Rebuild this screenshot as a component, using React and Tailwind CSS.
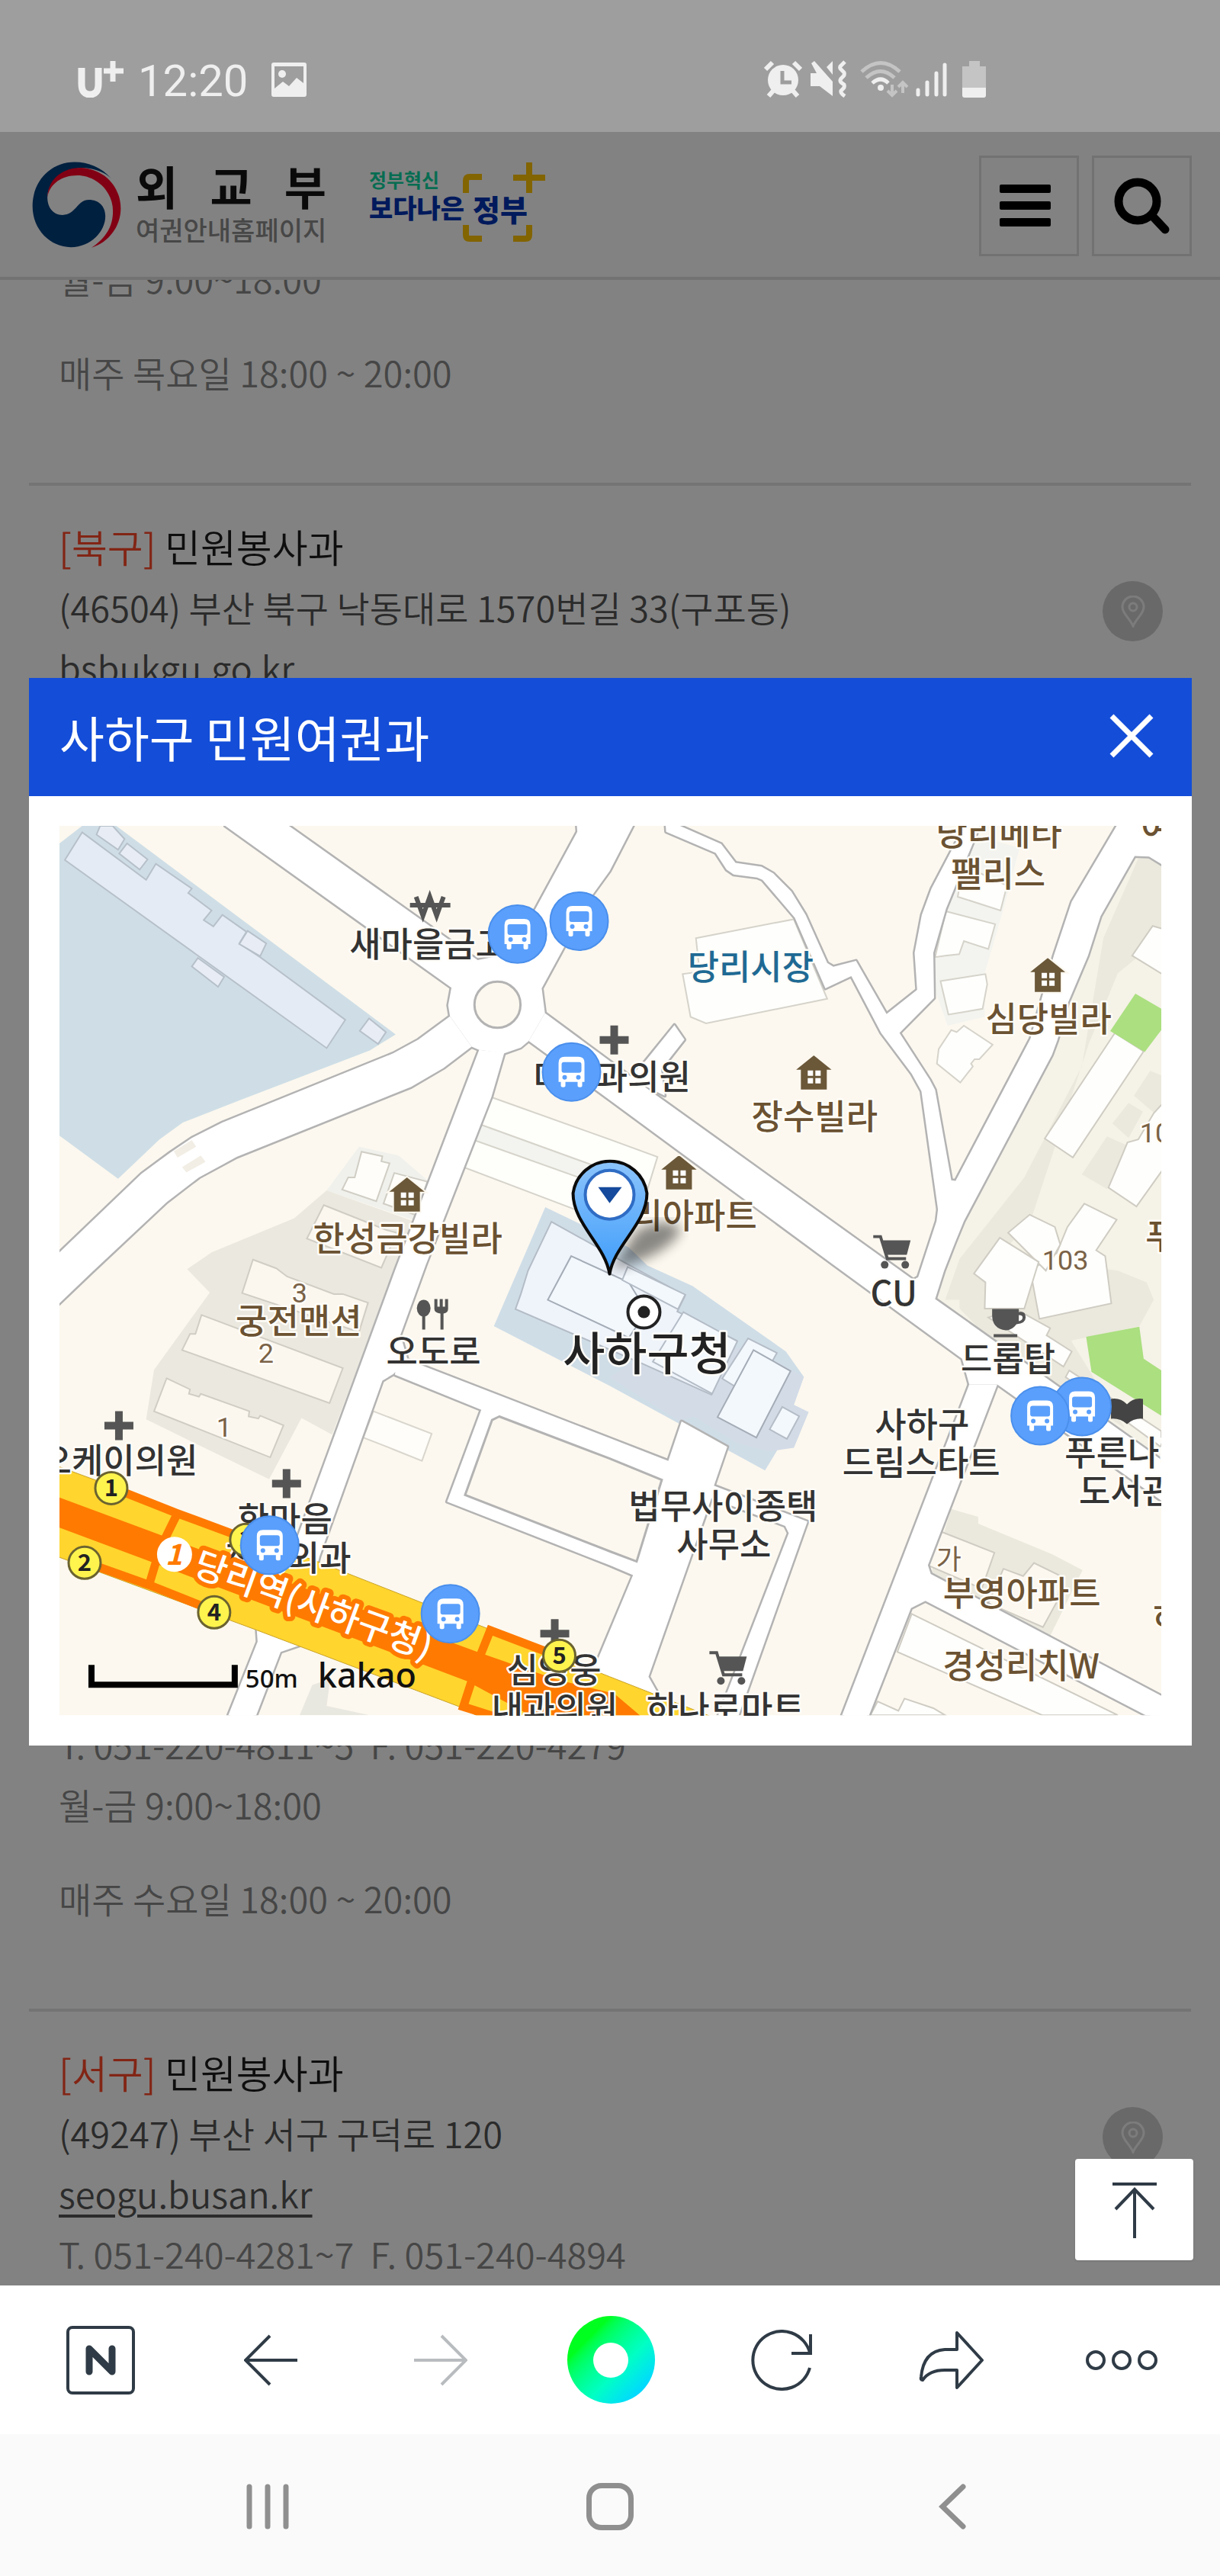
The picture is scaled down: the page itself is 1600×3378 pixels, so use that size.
const offices = [
  {
    id: "prev",
    size: "",
    hours: ["월-금 9:00~18:00", "매주 목요일 18:00 ~ 20:00"],
  },
  {
    id: "bukgu",
    size: "min-h-[667px]",
    district: "북구",
    name: "민원봉사과",
    address: "(46504) 부산 북구 낙동대로 1570번길 33(구포동)",
    site: "bsbukgu.go.kr",
  },
  {
    id: "sahagu",
    size: "min-h-[1334px] justify-end",
    tel: "051-220-4811~5",
    fax: "051-220-4279",
    hours: ["월-금 9:00~18:00", "매주 수요일 18:00 ~ 20:00"],
  },
  {
    id: "seogu",
    size: "",
    district: "서구",
    name: "민원봉사과",
    address: "(49247) 부산 서구 구덕로 120",
    site: "seogu.busan.kr",
    tel: "051-240-4281~7",
    fax: "051-240-4894",
  },
];

// ground areas and buildings: [points, fill, stroke]
const areas = [
  ["80,35 175,35 952,750 880,805 520,975 360,1052 295,1110 180,1245 17,1097 17,95", "#cfdee6"],
  ["850,1135 960,1165 1040,1250 1010,1390 760,1285", "#f0f1ec"],
  ["760,1285 1000,1390 950,1560 775,2122 690,2065 600,2275 258,2070 280,1900 435,1635 372,1555 440,1497 670,1380", "#ebe8df"],
  ["1368,1342 1600,1480 1652,1542 1777,1612 2037,1837 2087,1924 2059,2020 2100,2045 2059,2167 2027,2147 1979,2245 1547,1955 1225,1750", "#cfdde7"],
  ["1547,1925 1700,1800 1950,1830 2087,1924 2059,2020 2100,2045 2059,2167 1990,2180 1900,2150 1780,2060 1740,2075", "#d3dbe7"],
  ["3007,138 3081,165 3081,2205 2452,1657 2477,1560 2532,1390 2792,770 2912,345", "#f5f2e7"],
  ["3020,138 3050,140 3081,165 3081,420 2960,540 2880,780 2720,1380 2640,1500 2560,1660 2480,1660 2520,1520 2700,1240 2860,860 2920,420", "#ebe8dd"],
  ["2520,1560 2600,1500 2960,1560 3040,1600 3060,1660 3020,1750 2830,1800 2980,2100 2800,1960 2600,1790 2520,1690", "#ebe8dd"],
  ["3050,875 3081,890 3081,1040 3005,960", "#ebe8dd"],
  ["2990,985 3030,1015 2990,1105 2945,1055", "#ebe8dd"],
  ["2930,1100 2985,1130 2930,1280 2860,1230", "#ebe8dd"],
  ["2570,70 2687,110 2640,330 2590,540 2590,690 2487,720 2455,610 2449,470 2482,320", "#f3f4ef"],
  ["2497,2377 2572,2404 2572,2427 2777,2532 2862,2587 2772,2812 2440,2602", "#ebe9de"],
  ["720,2980 770,2960 760,3052 880,3084 685,3084", "#e9e8e0"],
];

const buildings = [
  ["80,57 258,220 285,165 385,250 375,265 440,325 418,358 445,380 470,340 537,398 517,438 575,485 812,700 760,797 32,152", "#e4ebf4", "#b7c0ca"],
  ["130,35 165,35 198,80 180,117 120,65", "#e8edf5", "#b7c0ca"],
  ["205,95 262,150 240,185 183,130", "#e8edf5", "#b7c0ca"],
  ["540,395 592,438 575,482 517,440", "#e8edf5", "#b7c0ca"],
  ["402,488 475,553 458,587 385,517", "#e8edf5", "#b7c0ca"],
  ["878,695 925,742 903,783 852,738", "#e8edf5", "#b7c0ca"],
  ["857,1152 915,1168 912,1185 935,1192 898,1322 803,1282 820,1240 838,1240", "#fefdf9", "#d0cdc4"],
  ["948,1225 1040,1255 1010,1370 918,1330", "#fefdf9", "#d0cdc4"],
  ["752,1335 925,1420 955,1430 912,1550 705,1450", "#fbf7ef", "#d0cdc4"],
  ["555,1522 620,1552 650,1580 780,1640 805,1640 875,1670 850,1770 525,1637", "#fbf7ef", "#d0cdc4"],
  ["412,1712 805,1894 768,2014 358,1832 380,1777 395,1777", "#fbf7ef", "#d0cdc4"],
  ["315,1929 380,1967 377,1982 405,1992 410,1982 545,2042 543,2060 570,2067 575,2057 640,2090 603,2200 280,2042", "#fbf7ef", "#d0cdc4"],
  ["890,2042 1052,2119 1025,2212 950,2175 930,2165 862,2132", "#fefdf9", "#d9d6cd"],
  ["1218,965 1547,1110 1680,1170 1640,1330 1600,1420 1140,1205", "#fefefa", "#d5d3ca"],
  ["1190,1060 1560,1225 1540,1275 1165,1110", "#f3f4ef", "#d5d3ca"],
  ["1385,1392 1600,1540 1757,1645 1735,1700 1900,1800 1830,1985 1640,1880 1285,1692 1300,1640 1320,1560", "#eff4fb", "#b4bcc6"],
  ["1440,1510 1600,1600 1650,1700 1600,1790 1375,1660", "#f3f8fd", "#a4acb6"],
  ["1597,1547 1757,1642 1737,1692 1582,1592", "#f3f8fd", "#b4bcc6"],
  ["1752,1702 1902,1802 1832,1982 1667,1872", "#f3f8fd", "#b4bcc6"],
  ["1932,1792 2012,1842 1992,1887 1900,1960 1860,1930", "#f3f8fd", "#b4bcc6"],
  ["1947,1832 2050,1904 1955,2132 1847,2062", "#f3f8fd", "#a4acb6"],
  ["2027,2027 2074,2059 2040,2137 1992,2104", "#f3f8fd", "#b4bcc6"],
  ["1787,420 2059,355 2152,628 1815,712 1772,690 1750,543 1797,535", "#fefefc", "#d5d3ca"],
  ["2530,170 2652,240 2634,325 2515,278", "#fefefc", "#d5d3ca"],
  ["2482,328 2619,372 2600,457 2532,430 2519,475 2480,480 2452,485", "#fefefc", "#d5d3ca"],
  ["2467,567 2592,543 2597,578 2584,662 2489,682", "#fefefc", "#d5d3ca"],
  ["2532,720 2612,785 2575,835 2562,835 2552,850 2557,860 2522,915 2457,850 2462,800 2497,735 2512,742", "#fefefc", "#d5d3ca"],
  ["3057,378 3090,390 3090,548 3000,480", "#fefefc", "#cfccc3"],
  ["2952,745 3032,808 2835,1172 2757,1107", "#fefefc", "#cfccc3"],
  ["3090,980 3060,1020 3017,1110 2987,1120 2960,1200 2934,1275 3012,1340 3090,1205", "#fefefc", "#cfccc3"],
  ["2867,1330 2957,1385 2900,1490 2925,1510 2942,1672 2742,1725 2717,1560 2790,1500 2820,1410", "#fefefc", "#cfccc3"],
  ["2715,1368 2785,1410 2800,1470 2760,1560 2655,1430", "#fefefc", "#cfccc3"],
  ["2632,1447 2740,1530 2700,1690 2590,1690 2592,1600 2560,1570", "#fefefc", "#cfccc3"],
  ["2677,1692 2772,1757 2762,1782 2832,1837 2809,1889 2600,1720", "#fefefc", "#cfccc3"],
  ["2825,1902 3081,2110 3081,2165 2815,1925", "#fefefc", "#cfccc3"],
  ["2467,2454 2617,2527 2582,2650 2432,2570", "#fcf8ef", "#cfccc3"],
  ["2642,2582 2697,2607 2727,2562 2802,2607 2792,2692 2752,2782 2600,2700", "#fcf8ef", "#cfccc3"],
  ["2387,2737 2960,3084 2750,3084 2347,2867", "#fefefc", "#cfccc3"],
  ["2292,3037 2350,3069 2367,3027 2447,3060 2480,3084 2272,3084", "#fefefc", "#cfccc3"],
];

const parks = [
  "3009,610 3081,662 3081,735 3035,810 2939,738",
  "2872,1787 3020,1752 3032,1862 3081,1902 3081,2057 2887,1907",
];

const roads = [
  "478,35 655,35 1180,495 1230,560 1107,590",
  "1455,20 1457,55 1270,480 1358,592 1500,270 1547,190 1618,20",
  "1107,590 1180,495 1240,480 1300,430 1358,592 1367,677 1322,772 1300,795 1254,815 1184,803 1163,792 1103,688 1098,650",
  "1103,688 1015,768 945,815 470,1052 385,1105 325,1155 245,1228 0,1517 0,1692 105,1568 315,1325 405,1240 510,1170 995,930 1085,865 1163,792",
  "1184,803 1254,813 1218,965 1035,1542 965,1780 985,1865 945,1915 915,1937 740,2540 730,2590 640,2560 680,2470 950,1560",
  "1367,677 1667,950 2392,1592 2452,1657 3100,2225 3100,2365 2625,1950 2547,1950 2527,1862 2172,1542 1547,975 1322,772",
  "1647,840 1727,718 1755,768 1690,870 1700,960 1600,900",
  "1702,20 1704,55 1842,128 1872,185 1892,202 1957,212 1972,220 2062,350 2147,592 2219,550 2302,745 2387,885 2414,945 2460,1350 2456,1390 2405,1582 2380,1600 2452,1657 2477,1560 2507,1465 2532,1390 2777,820 2792,770 2822,640 2877,480 2912,345 3007,138 3047,140 3100,180 3100,20 2964,20 2832,295 2782,480 2717,765 2509,1252 2497,1250 2452,940 2437,905 2353,745 2449,625 2447,470 2482,320 2565,70 2580,20 2540,20 2442,250 2415,340 2395,470 2402,597 2317,680 2232,498 2169,518 2152,505 2092,340 2052,260 2002,198 1969,175 1897,162 1857,97 1715,20",
  "2547,1950 2625,1950 2432,2570 2440,2600 3100,3030 3100,3124 2425,2692 2385,2717 2262,3104 2187,3104",
  "955,1850 1040,1892 1547,2134 1710,2212 1747,2077 1874,2164 1837,2297 2097,2420 1900,3104 1843,3104 2045,2460 2035,2435 1830,2340 1655,2952 1700,3050 1480,2960 1515,2890 1612,2604 1547,2570 1095,2352 1190,2037 950,1917",
  "565,2780 568,2832 480,3104 558,3104 632,2867 720,2830",
];

const brown = "#6b5232";
const dark = "#333333";

const labels = [
  { t: "새마을금고", x: 484, y: 172 },
  { t: "미치과의원", x: 725, y: 346 },
  { t: "당리시장", x: 907, y: 202, c: "#1f6a94" },
  { t: "장수빌라", x: 991, y: 398, c: brown },
  { t: "심당빌라", x: 1298, y: 270, c: brown },
  { t: "당리메타", x: 1233, y: 26, c: brown },
  { t: "팰리스", x: 1232, y: 80, c: brown },
  { t: "여", x: 1440, y: 19, c: brown },
  { t: "당리아파트", x: 812, y: 528, c: brown },
  { t: "푸", x: 1446, y: 555, c: brown },
  { t: "한성금강빌라", x: 457, y: 558, c: brown },
  { t: "궁전맨션", x: 314, y: 666, c: brown },
  { t: "오도로", x: 491, y: 706 },
  { t: "오케이의원", x: 78, y: 850 },
  { t: "한마음", x: 296, y: 927 },
  { t: "정형외과", x: 300, y: 978 },
  { t: "CU", x: 1095, y: 629 },
  { t: "드롭탑", x: 1245, y: 716 },
  { t: "법무사이종택", x: 871, y: 910 },
  { t: "사무소", x: 872, y: 960 },
  { t: "사하구", x: 1132, y: 803 },
  { t: "드림스타트", x: 1131, y: 853 },
  { t: "푸른나라", x: 1402, y: 840 },
  { t: "도서관", x: 1400, y: 890 },
  { t: "부영아파트", x: 1263, y: 1024, c: brown },
  { t: "경성리치W", x: 1262, y: 1119, c: brown },
  { t: "하", x: 1456, y: 1056, c: brown },
  { t: "심영웅", x: 649, y: 1125 },
  { t: "내과의원", x: 650, y: 1175 },
  { t: "하나로마트", x: 874, y: 1175 },
];

const blockNumbers = [
  { t: "3", x: 315, y: 625 },
  { t: "2", x: 271, y: 704 },
  { t: "1", x: 216, y: 802 },
  { t: "103", x: 1320, y: 582 },
  { t: "10", x: 1438, y: 415 },
  { t: "가", x: 1167, y: 976 },
];

const houses = [
  [990, 324],
  [1297, 196],
  [813, 455],
  [456, 484],
];
const clinics = [
  [728, 281],
  [78, 787],
  [298, 863],
  [650, 1060],
];
const carts = [
  [1093, 559],
  [878, 1105],
];
const exits = [
  { n: "1", x: 68, y: 869 },
  { n: "2", x: 33, y: 967 },
  { n: "3", x: 245, y: 937 },
  { n: "4", x: 203, y: 1032 },
  { n: "5", x: 656, y: 1089 },
];
const stops = [
  [601, 142],
  [682, 125],
  [672, 323],
  [276, 944],
  [513, 1034],
  [1342, 762],
  [1287, 774],
];

function Bus({ x, y }) {
  return (
    <g transform={`translate(${x} ${y})`}>
      <circle r="38" fill="#5a9ffb" stroke="#4a8fec" strokeWidth="2" />
      <path
        fill="#fff"
        d="M-9-20H9Q17-20 17-12V13H14V18Q14 20 11 20Q8 20 8 18V13H-8V18Q-8 20-11 20Q-14 20-14 18V13H-17V-12Q-17-20-9-20Z"
      />
      <rect x="-13" y="-13" width="26" height="14" rx="3" fill="#5a9ffb" />
      <circle cx="-9" cy="7" r="3" fill="#5a9ffb" />
      <circle cx="9" cy="7" r="3" fill="#5a9ffb" />
    </g>
  );
}

function House({ x, y }) {
  return (
    <g transform={`translate(${x} ${y})`}>
      <path d="M0-24L26-3H18V23H-18V-3H-26Z" fill="#6b5839" stroke="#fcf8ef" strokeWidth="2" />
      <path d="M-8-3h7v7h-7zM2-3h7v7H2zM-8 7h7v7h-7zM2 7h7v7H2z" fill="#fff" />
    </g>
  );
}

function Cart({ x, y }) {
  return (
    <g transform={`translate(${x} ${y})`} fill="#555">
      <path d="M-25-22H-14L-12-15H24L19 4H-6L-5 7H18V11H-8L-17-18H-25Z" />
      <circle cx="-10" cy="17" r="5" />
      <circle cx="17" cy="17" r="5" />
    </g>
  );
}

function AreaMap() {
  return (
    <svg viewBox="0 0 1446 1167" className="block w-full font-['Noto_Sans_CJK_KR',sans-serif]" role="img" aria-label="사하구청 지도">
      <rect width="1446" height="1167" fill="#fcf8ef" />
      <svg width="1446" height="1167" viewBox="17 35 3064 3049" preserveAspectRatio="none">
        {areas.map(([points, fill]) => (
          <polygon key={points} points={points} fill={fill} />
        ))}
        {buildings.map(([points, fill, stroke]) => (
          <polygon key={points} points={points} fill={fill} stroke={stroke} strokeWidth="2" vectorEffect="non-scaling-stroke" />
        ))}
        {parks.map((points) => (
          <polygon key={points} points={points} fill="#abdf80" />
        ))}
        {roads.map((points) => (
          <polygon key={points} points={points} fill="none" stroke="#b3b3b3" strokeWidth="5" strokeLinejoin="round" vectorEffect="non-scaling-stroke" />
        ))}
        {roads.map((points) => (
          <polygon key={points} points={points} fill="#fff" />
        ))}
        <ellipse cx="1235" cy="648" rx="64" ry="79" fill="#fcf8ef" stroke="#b3b3b3" strokeWidth="3" vectorEffect="non-scaling-stroke" />
        <polygon points="1240,2060 1547,2204 1692,2277 1622,2557 1547,2522 1145,2329 1220,2072" fill="#fcf8ef" stroke="#b3b3b3" strokeWidth="3" vectorEffect="non-scaling-stroke" />
        <polygon points="335,1150 385,1112 397,1135 345,1172" fill="#f2eee5" />
        <polygon points="358,1205 410,1165 423,1187 370,1223" fill="#f2eee5" />
        <polygon points="0,2225 740,2560 1547,2952 1840,3094 1190,3094 1140,3060 565,2792 0,2535" fill="#ffd52e" stroke="#c9a227" strokeWidth="1" vectorEffect="non-scaling-stroke" />
        <polygon points="0,2330 300,2467 1185,2870 1400,2962 1560,3010 1640,3094 1340,3094 1150,2967 280,2562 0,2433" fill="#ff7a00" />
        <g fill="none" stroke="#ff7a00" strokeWidth="11">
          <polyline points="160,2302 345,2392 520,2472" vectorEffect="non-scaling-stroke" />
          <polyline points="345,2392 310,2480" vectorEffect="non-scaling-stroke" />
          <polyline points="85,2558 265,2637 430,2718" vectorEffect="non-scaling-stroke" />
          <polyline points="285,2560 265,2642" vectorEffect="non-scaling-stroke" />
          <polyline points="1390,2875 1215,2793 1187,2880" vectorEffect="non-scaling-stroke" />
          <polyline points="1165,2960 1140,3055 1230,3090" vectorEffect="non-scaling-stroke" />
        </g>
      </svg>

      <g fill="#555">
        {clinics.map(([x, y]) => (
          <path key={y} transform={`translate(${x} ${y})`} d="M-5-19H5V-5H19V5H5V19H-5V5H-19V-5H-5Z" />
        ))}
      </g>
      {houses.map(([x, y]) => (
        <House key={x} x={x} y={y} />
      ))}
      {carts.map(([x, y]) => (
        <Cart key={x} x={x} y={y} />
      ))}
      <g fill="none" stroke="#555" strokeWidth="6">
        <path d="M468 93L477 118L486 93L495 118L504 93M460 104H513" />
      </g>
      <g fill="#555" transform="translate(490 641)">
        <ellipse cx="-12" cy="-8" rx="9" ry="11" />
        <path d="M-14 0h4v20h-4zM2-20h4v10h3v-10h4v10h3v-10h4v13q0 5-6 6v21h-4V-1q-8-1-8-6z" />
      </g>
      <g fill="#555" transform="translate(1245 652)">
        <path d="M-21-18H14V-14Q23-16 23-7Q23 1 11 2Q5 10-3 10Q-21 8-21-10ZM14-10V-2Q19-3 19-7Q19-10 14-10Z" />
        <path d="M-19 15h31v4h-31z" />
      </g>
      <path d="M1380 752Q1392 750 1401 759Q1410 750 1422 752V778Q1410 777 1401 785Q1392 777 1380 778Z" fill="#444" />

      <g textAnchor="middle" stroke="#fffdf8" strokeWidth="5" strokeLinejoin="round" paintOrder="stroke">
        <g fontSize="36" className="font-['Roboto','Noto_Sans_CJK_KR',sans-serif]">
          {blockNumbers.map((l) => (
            <text key={l.t} x={l.x} y={l.y} fill="#7a6247">
              {l.t}
            </text>
          ))}
        </g>
        <g fontSize="45" fontWeight="500">
          {labels.map((l) => (
            <text key={l.t} x={l.x} y={l.y} fill={l.c || dark}>
              {l.t}
            </text>
          ))}
        </g>
        <text x="771" y="714" fontSize="60" fontWeight="500" fill="#222">
          사하구청
        </text>
      </g>
      <circle cx="767" cy="638" r="21" fill="#fff" stroke="#222" strokeWidth="4" />
      <circle cx="767" cy="638" r="8" fill="#222" />

      {exits.map((e) => (
        <g key={e.n}>
          <circle cx={e.x} cy={e.y} r="21" fill="#fff44d" stroke="#6b6330" strokeWidth="3" />
          <text x={e.x} y={e.y + 11} textAnchor="middle" fontSize="31" fontWeight="700" fill="#222">
            {e.n}
          </text>
        </g>
      ))}
      <g transform="rotate(20 335 1025)">
        <text x="333" y="1040" textAnchor="middle" fontSize="46" fontWeight="500" fill="#fff" stroke="#ff7a00" strokeWidth="12" strokeLinejoin="round" paintOrder="stroke">
          당리역(사하구청)
        </text>
      </g>
      <circle cx="151" cy="956" r="23" fill="#fff" />
      <text x="150" y="970" textAnchor="middle" fontSize="38" fontWeight="700" fontStyle="italic" fill="#ff7a00">
        1
      </text>
      {stops.map(([x, y]) => (
        <Bus key={x} x={x} y={y} />
      ))}

      <path d="M42 1101V1127H230V1101" fill="none" stroke="#000" strokeWidth="8" />
      <g className="font-['Noto_Sans',sans-serif]" fill="#111" fontWeight="500">
        <text x="244" y="1131" fontSize="33">
          50m
        </text>
        <text x="339" y="1131" fontSize="45">
          kakao
        </text>
      </g>

      <defs>
        <linearGradient id="pin" x1="0" y1="0" x2="0" y2="1">
          <stop offset="0" stopColor="#8cc4fb" />
          <stop offset="1" stopColor="#3f9dfb" />
        </linearGradient>
        <filter id="soft">
          <feGaussianBlur stdDeviation="8" />
        </filter>
      </defs>
      <path d="M724 584L758 530Q800 510 816 530Q800 560 740 578Z" opacity="0.45" filter="url(#soft)" />
      <path
        d="M722 588C716 550 674 522 674 482A49 49 0 0 1 771 482C771 522 728 550 722 588Z"
        fill="url(#pin)"
        stroke="#0a0a0a"
        strokeWidth="4"
        strokeLinejoin="round"
      />
      <circle cx="722" cy="484" r="32" fill="#fff" stroke="#2f6cc4" strokeWidth="4" />
      <path d="M707 474H738L722 495Z" fill="#154a9c" />
    </svg>
  );
}

function StatusBar() {
  return (
    <div className="flex shrink-0 items-end bg-[#9e9e9e] px-[102px] pt-[79px] pb-[45px] text-[#efefef]">
      <svg className="h-[49px] w-[60px]" viewBox="0 0 60 49" fill="none" stroke="currentColor" role="img" aria-label="U+">
        <path d="M5 10V31Q5 45 16 45Q27 45 27 31V10" strokeWidth="9" />
        <path d="M46 1V28M34 14H60" strokeWidth="7" />
      </svg>
      <time className="ml-[19px] font-['Roboto',sans-serif] text-[58px] leading-[44px]">12:20</time>
      <svg className="ml-[30px] h-[46px] w-[48px]" viewBox="0 0 48 46" fill="currentColor">
        <path fillRule="evenodd" d="M4 0H44Q47 0 47 3V42Q47 45 44 45H4Q1 45 1 42V3Q1 0 4 0ZM5 5V34L16 25L24 31L34 20L43 27V5Z" />
        <circle cx="15" cy="15" r="5" />
      </svg>
      <div className="ml-auto flex w-[496px] items-end">
        <svg className="h-[49px] w-[50px]" viewBox="0 0 50 49">
          <g fill="none" stroke="currentColor" strokeWidth="6">
            <path d="M2 12L11 3M39 3L48 12M6 47L13 39M44 47L37 39" />
          </g>
          <circle cx="25" cy="26" r="20" fill="currentColor" />
          <path d="M24 14V29H36" fill="none" stroke="#9e9e9e" strokeWidth="5" />
        </svg>
        <svg className="ml-[10px] h-[49px] w-[48px]" viewBox="0 0 48 49" fill="currentColor">
          <path d="M1 17H9L2 4L6 1L30 28V47L13 34H1ZM22 9L30 1V19Z" />
          <path d="M46 2L40 8Q39 10 41 12L45 16Q46 19 44 21L41 24Q39 27 41 29L45 32Q46 35 44 37L41 40Q40 43 46 47" fill="none" stroke="currentColor" strokeWidth="5" />
        </svg>
        <svg className="ml-[17px] h-[49px] w-[64px]" viewBox="0 0 64 49" fill="none" strokeWidth="5">
          <path d="M3 15Q28-8 53 15M9 23Q28 6 46 23" stroke="#c4c4c4" />
          <path d="M17 30Q28 20 38 30" stroke="currentColor" />
          <circle cx="28" cy="36" r="4" fill="currentColor" />
          <path d="M43 32V46M37 40L43 46L49 40M57 43V29M51 35L57 29L63 35" stroke="#c4c4c4" strokeWidth="4" />
        </svg>
        <svg className="ml-[8px] h-[49px] w-[44px]" viewBox="0 0 44 49" stroke="currentColor" strokeWidth="5" strokeLinecap="round">
          <path d="M5 39V45M17 29V45M29 17V45M40 6V45" />
        </svg>
        <svg className="ml-[19px] h-[49px] w-[32px]" viewBox="0 0 32 49">
          <path d="M9 1H23V8H31V36H0V8H9Z" fill="#c4c4c4" />
          <path d="M0 36H31V46Q31 49 28 49H3Q0 49 0 46Z" fill="currentColor" />
        </svg>
      </div>
    </div>
  );
}

function SiteHeader() {
  return (
    <header className="flex h-[194px] shrink-0 items-start border-b-4 border-[#dfdfdf] pr-[37px] pl-[42px]">
      <a href="#home" className="mt-[38px] flex">
        <svg className="h-[115px] w-[117px]" viewBox="36 62 354 345">
          <path
            fill="#003f7d"
            d="M350 130C310 85 260 65 205 65C110 65 38 140 38 240C38 335 110 403 190 403C270 403 327 340 327 280C327 240 300 215 262 215C215 215 210 275 157 275C120 275 97 245 97 205C97 140 170 90 235 88C290 90 330 110 350 130Z"
          />
          <path
            fill="#ff0026"
            d="M97 205C100 130 160 88 230 88C320 92 388 160 388 250C388 320 340 385 272 405C330 365 357 320 357 260C357 180 290 118 215 118C150 118 105 155 97 205Z"
          />
        </svg>
        <span className="ml-[19px] block w-[250px]">
          <span className="flex justify-between text-[60px] leading-[64px] font-bold text-[#141414]">
            <span>외</span>
            <span>교</span>
            <span>부</span>
          </span>
          <span className="mt-[4px] block text-[34px] leading-[44px] font-medium whitespace-nowrap text-[#8c8c8c]">여권안내홈페이지</span>
        </span>
      </a>
      <a href="#innovation" className="mt-[38px] ml-[56px] flex font-bold">
        <span className="block w-[122px] whitespace-nowrap">
          <span className="mt-[10px] block text-[25px] leading-[28px] text-[#0ed6a2]">정부혁신</span>
          <span className="block text-[34px] leading-[46px] font-black text-[#0033b4]">보다나은</span>
        </span>
        <span className="relative block h-[106px] w-[110px]">
          <svg className="absolute inset-0 size-full" viewBox="0 0 110 106" fill="none" stroke="#ffc400" strokeWidth="8">
            <path d="M5 42V26Q5 21 10 21H26M5 84V97Q5 102 10 102H26M67 102H83Q88 102 88 97V84M88 2V42M67 22H109" />
          </svg>
          <span className="absolute top-[37px] left-[14px] text-[39px] leading-[50px] font-black text-[#0033b4]">정부</span>
        </span>
      </a>
      <div className="mt-[31px] ml-auto flex gap-[17px]">
        <button aria-label="메뉴" className="flex h-[132px] w-[131px] items-center border-3 border-[#dfdfdf] pl-[24px]">
          <svg className="h-[56px] w-[68px]" viewBox="0 0 68 56">
            <rect width="67" height="11" rx="2" />
            <rect y="22" width="67" height="11" rx="2" />
            <rect y="44" width="67" height="11" rx="2" />
          </svg>
        </button>
        <button aria-label="검색" className="flex h-[132px] w-[131px] items-center justify-center border-3 border-[#dfdfdf]">
          <svg className="size-[74px]" viewBox="0 0 74 74" fill="none" stroke="#000">
            <circle cx="31" cy="31" r="25" strokeWidth="11" />
            <path d="M51 51L67 68" strokeWidth="11" strokeLinecap="round" />
          </svg>
        </button>
      </div>
    </header>
  );
}

function Office({ office }) {
  return (
    <li className={`flex flex-col border-b-4 border-[#e3e3e3] pt-[40px] pr-[37px] pb-[106px] pl-[39px] ${office.size}`}>
      <div className="flex items-start justify-between">
        <div>
          {office.district && (
            <h2 className="text-[51px] leading-[79px] text-[#1c1c1c]">
              <span className="text-[#ff4a2a]">[{office.district}]</span> {office.name}
            </h2>
          )}
          {office.address && <p className="text-[#555]">{office.address}</p>}
          {office.site && (
            <a href={`http://${office.site}`} className="block text-[#555] underline decoration-4 underline-offset-8">
              {office.site}
            </a>
          )}
        </div>
        {office.address && (
          <button aria-label={`${office.name} 지도 보기`} className="mt-[85px] flex size-[79px] items-center justify-center rounded-full bg-[#cfcfcf]">
            <svg className="h-[42px] w-[34px]" viewBox="0 0 34 42" fill="none" stroke="#f4f4f4" strokeWidth="3">
              <path d="M17 40C13 30 3 24 3 15A14 14 0 0 1 31 15C31 24 21 30 17 40Z" />
              <circle cx="17" cy="15" r="5" />
            </svg>
          </button>
        )}
      </div>
      {office.tel && (
        <p className="text-[#8a8a8a]">
          T. {office.tel} &nbsp;F. {office.fax}
        </p>
      )}
      {office.hours && (
        <>
          <p className="text-[#8a8a8a]">{office.hours[0]}</p>
          <p className="mt-[44px] text-[#8a8a8a]">{office.hours[1]}</p>
        </>
      )}
    </li>
  );
}

function MapDialog() {
  return (
    <section role="dialog" aria-label="사하구 민원여권과" className="w-full bg-white">
      <div className="flex h-[155px] items-center justify-between bg-[#134dd8] px-[40px] pb-[4px] text-white">
        <h1 className="text-[64px] leading-[80px]">사하구 민원여권과</h1>
        <button aria-label="닫기" className="pr-[10px]">
          <svg className="size-[58px]" viewBox="0 0 58 58" stroke="currentColor" strokeWidth="7">
            <path d="M3 3L55 55M55 3L3 55" />
          </svg>
        </button>
      </div>
      <div className="px-[40px] py-[39px]">
        <AreaMap />
      </div>
    </section>
  );
}

function Toolbar() {
  return (
    <nav className="grid h-[195px] shrink-0 grid-cols-7 bg-white pr-[17px] pl-[20px] text-[#2f3b46]">
      <button aria-label="네이버 홈" className="flex items-center justify-center">
        <span className="flex size-[90px] items-center justify-center rounded-[8px] border-4 border-current">
          <svg className="size-[40px]" viewBox="0 0 40 40" fill="none" stroke="currentColor" strokeWidth="9" strokeLinecap="round" strokeLinejoin="round">
            <path d="M5 35V5L35 35V5" />
          </svg>
        </span>
      </button>
      <button aria-label="뒤로" className="flex items-center justify-center">
        <svg className="size-[70px]" viewBox="0 0 70 70" fill="none" stroke="currentColor" strokeWidth="4">
          <path d="M34 3L2 35L34 67M2 35H70" />
        </svg>
      </button>
      <button aria-label="앞으로" className="flex items-center justify-center text-[#b9bcbf]">
        <svg className="size-[70px]" viewBox="0 0 70 70" fill="none" stroke="currentColor" strokeWidth="4">
          <path d="M36 3L68 35L36 67M68 35H0" />
        </svg>
      </button>
      <button aria-label="그린닷" className="flex items-center justify-center">
        <span className="flex size-[115px] items-center justify-center rounded-full bg-linear-to-br from-[#00ff1e] from-25% via-[#00ffc3] via-60% to-[#00d8ff] to-85%">
          <span className="size-[46px] rounded-full bg-white" />
        </span>
      </button>
      <button aria-label="새로고침" className="flex items-center justify-center">
        <svg className="size-[80px]" viewBox="0 0 80 80" fill="none" stroke="currentColor" strokeWidth="4">
          <path d="M77 50A38 38 0 1 1 77 30M78 6V31H53" />
        </svg>
      </button>
      <button aria-label="공유" className="flex items-center justify-center">
        <svg className="h-[78px] w-[86px]" viewBox="0 0 86 78" fill="none" stroke="currentColor" strokeWidth="4" strokeLinejoin="round">
          <path d="M50 3L83 39L50 75V52H34Q14 52 5 65Q2 65 3 61Q6 27 34 25H50Z" />
        </svg>
      </button>
      <button aria-label="더보기" className="flex items-center justify-center">
        <svg className="h-[28px] w-[94px]" viewBox="0 0 94 28" fill="none" stroke="currentColor" strokeWidth="4">
          <circle cx="13" cy="14" r="11" />
          <circle cx="47" cy="14" r="11" />
          <circle cx="81" cy="14" r="11" />
        </svg>
      </button>
    </nav>
  );
}

function SystemNav() {
  return (
    <nav className="grid h-[186px] shrink-0 grid-cols-3 bg-[#fafafa] px-[127px] pt-[4px] text-[#8f8f8f]">
      <button aria-label="최근 앱" className="flex items-center justify-center">
        <svg className="size-[60px]" viewBox="0 0 60 60" stroke="currentColor" strokeWidth="7" strokeLinecap="round">
          <path d="M6 4V56M30 4V56M54 4V56" />
        </svg>
      </button>
      <button aria-label="홈 화면" className="flex items-center justify-center">
        <span className="size-[62px] rounded-[20px] border-7 border-current" />
      </button>
      <button aria-label="이전" className="flex items-center justify-center">
        <svg className="h-[60px] w-[36px]" viewBox="0 0 36 60" fill="none" stroke="currentColor" strokeWidth="7" strokeLinecap="round">
          <path d="M32 4L5 30L32 56" />
        </svg>
      </button>
    </nav>
  );
}

export default function App() {
  return (
    <div className="flex h-screen flex-col overflow-hidden bg-white font-['Noto_Sans_CJK_KR',sans-serif]">
      <StatusBar />
      <main className="relative flex min-h-0 flex-1 flex-col">
        <SiteHeader />
        <div className="min-h-0 flex-1 overflow-hidden px-[38px]">
          <ul className="-mt-[82px] text-[47px] leading-[79px] font-[350]">
            {offices.map((office) => (
              <Office key={office.id} office={office} />
            ))}
          </ul>
        </div>
        <div className="absolute inset-0 flex items-center bg-black/49 pt-[8px] pr-[37px] pl-[38px]">
          <MapDialog />
        </div>
        <a
          href="#top"
          aria-label="맨 위로"
          className="absolute right-[35px] bottom-[33px] flex h-[133px] w-[155px] items-center justify-center rounded-[4px] bg-white text-[#2f3b46] shadow"
        >
          <svg className="h-[74px] w-[60px]" viewBox="0 0 60 74" fill="none" stroke="currentColor" strokeWidth="4">
            <path d="M1 3H59M30 10V74M5 36L30 10L55 36" />
          </svg>
        </a>
      </main>
      <Toolbar />
      <SystemNav />
    </div>
  );
}
